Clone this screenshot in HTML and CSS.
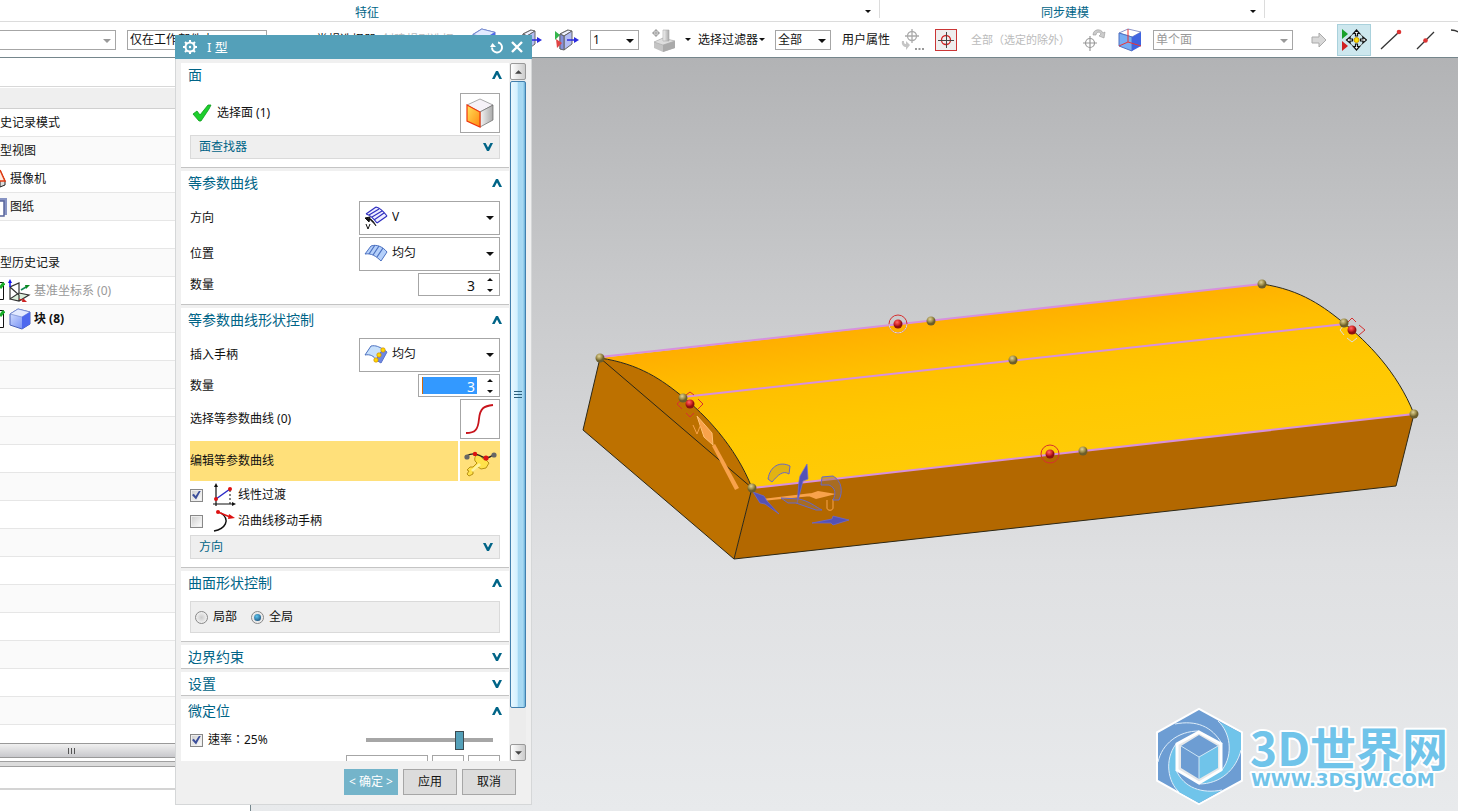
FILE: index.html
```html
<!DOCTYPE html>
<html lang="zh-CN">
<head>
<meta charset="utf-8">
<title>I 型</title>
<link rel="stylesheet" href="styles.css">
</head>
<body>
<svg width="0" height="0" class="defs" aria-hidden="true">
  <defs>
    <linearGradient id="cubeBlue" x1="0" y1="0" x2="1" y2="1"><stop offset="0" stop-color="#dfe8ff"/><stop offset="1" stop-color="#5f7df2"/></linearGradient>
    <linearGradient id="faceOrange" x1="0" y1="0" x2="1" y2="1"><stop offset="0" stop-color="#ffe25a"/><stop offset="1" stop-color="#ff8a10"/></linearGradient>
    <linearGradient id="greyFace"><stop offset="0" stop-color="#f4f4f4"/><stop offset="1" stop-color="#aaa"/></linearGradient>
    <symbol id="caret" viewBox="0 0 8 4"><path d="M0 0h8L4 4z" fill="currentColor"/></symbol>
    <symbol id="up" viewBox="0 0 12 10"><path d="M1 9h2.600L6 4.500 8.400 9H11L7 1H5z" fill="#006487"/></symbol>
    <symbol id="down" viewBox="0 0 12 10"><path d="M1 1h2.600L6 5.500 8.400 1H11L7 9H5z" fill="#006487"/></symbol>
    <symbol id="spin" viewBox="0 0 6 14"><path d="M0 3h6L3 0zM0 11h6L3 14z" fill="#111"/></symbol>
    <symbol id="cube" viewBox="0 0 22 22"><path d="M1 6 9 1l12 3v12l-8 5L1 17z" fill="url(#cubeBlue)" stroke="#4a62b8"/><path d="M1 6l12 3 8-5-12-3z" fill="#e3eaff" stroke="#7187cf" stroke-width=".7"/><path d="M13 9l8-5v12l-8 5z" fill="#4d68ee"/></symbol>
    <symbol id="slab" viewBox="0 0 26 24"><path d="M6 6 14 2v13l-8 6z" fill="url(#cubeBlue)" stroke="#666"/><path d="M6 6l8-4 4 1-8 5z" fill="#eef1ff" stroke="#666"/><path d="M10 8l8-5v13l-8 6z" fill="#b3bdf4" stroke="#666"/><path d="M6 6l4 2v14l-4-1z" fill="#8590dc" stroke="#666"/><path d="M13 12h8" stroke="#2b2bdf" stroke-width="1.500"/><path d="M20 9l5 3-5 3z" fill="#2b2bdf"/></symbol>
  </defs>
</svg>
<div class="app">
  <header class="ribbon">
    <div class="group group-feature"><span class="group-name">特征</span><svg class="caret"><use href="#caret"/></svg></div>
    <div class="group group-sync"><span class="group-name">同步建模</span><svg class="caret"><use href="#caret"/></svg></div>
    <div class="group-rest"></div>
  </header>
  <nav class="toolbar">
    <span class="combo w116 first"><select class="dim" aria-label="类型过滤器"><option></option></select><svg class="caret dim"><use href="#caret"/></svg></span>
    <span class="combo w140"><select aria-label="选择范围"><option>仅在工作部件内</option></select></span>
    <span class="tool-text w60">常规选择器</span>
    <span class="tool-text w84 faint">创建规则选择</span>
    <svg class="ic24" viewBox="0 0 22 22"><use href="#cube"/></svg>
    <svg class="slab-a" viewBox="0 0 26 24"><use href="#slab"/></svg>
    <svg class="slab-b" viewBox="0 0 26 24"><use href="#slab"/><path d="M1 3l5 4-5 5z" fill="#35b54c"/><path d="M2 11l6 4-5 5z" fill="#e04343"/></svg>
    <span class="combo w49"><select aria-label="层"><option>1</option></select><svg class="caret"><use href="#caret"/></svg></span>
    <svg class="ic24 stock" viewBox="0 0 24 24"><path d="M2 14l9-4 12 3v7l-12 4-9-4z" fill="#c4c4c4"/><path d="M2 14l9-4 12 3-12 4z" fill="#ddd" stroke="#aaa" stroke-width=".6"/><path d="M11 17v7l12-4v-7z" fill="#aaa"/><path d="M11 2h6v11h-6z" fill="url(#greyFace)" stroke="#aaa" stroke-width=".6"/><circle cx="4" cy="5" r="2.500" fill="none" stroke="#999"/><path d="M0 5h8M4 1v8" stroke="#999"/></svg>
    <svg class="caret small"><use href="#caret"/></svg>
    <span class="tool-text w60">选择过滤器</span>
    <svg class="caret small last"><use href="#caret"/></svg>
    <span class="combo w56"><select aria-label="过滤"><option>全部</option></select><svg class="caret"><use href="#caret"/></svg></span>
    <span class="tool-text attr">用户属性</span>
    <svg class="ic24 snap" viewBox="0 0 24 24"><g fill="none" stroke="#aaa" stroke-width="1.300"><circle cx="12" cy="8" r="4.500"/><path d="M5 8h14M12 1v14"/></g><path d="M2 13c-1 4 2 6 4 6v3l4-5-4-4v3c-2 0-2-1-2-3z" fill="#c5c5c5"/><path d="M15 20h2v2h-2zM18.500 20h2v2h-2zM22 20h2v2h-2z" fill="#999"/></svg>
    <svg class="target" viewBox="0 0 22 22"><rect x=".5" y=".5" width="21" height="21" fill="#eee" stroke="#cb3636"/><circle cx="11" cy="11" r="4.500" fill="none" stroke="#d02222" stroke-width="1.300"/><path d="M3 11.500h16M11.500 3v16" stroke="#444"/></svg>
    <span class="tool-text w111 faint">全部（选定的除外）</span>
    <svg class="ic24" viewBox="0 0 24 24"><g fill="none" stroke="#999" stroke-width="1.200"><circle cx="8" cy="15" r="4.500"/><path d="M1 15h14M8 8v15"/></g><path d="M11 7c0-6 8-7 10-2l2-1-1 6-5-2 2-2c-1-3-5-2-5 1z" fill="#ccc" stroke="#999" stroke-width=".6"/></svg>
    <svg class="ic24 facecube" viewBox="0 0 24 24"><path d="M1 5 10 1l13 3-9 5z" fill="#fff" stroke="#8a93c8"/><path d="M1 5l13 4v14L1 18z" fill="#77adf3" stroke="#5070c0"/><path d="M14 9l9-5v14l-9 5z" fill="#3f64e0"/><path d="M10 1v13l13 4M10 14 1 18" stroke="#e33" fill="none"/></svg>
    <span class="combo w140 faces"><select class="dim" aria-label="面规则"><option>单个面</option></select><svg class="caret dim"><use href="#caret"/></svg></span>
    <svg class="next" viewBox="0 0 16 16"><path d="M1 5h7V1l7 7-7 7v-4H1z" fill="#d8d8d8" stroke="#aaa"/></svg>
    <button class="snap-on" aria-label="启用捕捉点"><svg viewBox="0 0 26 24"><path d="M1 1l6 5-6 5z" fill="#19a12b"/><path d="M1 13l6 5-6 5z" fill="#d02020"/><circle cx="15.500" cy="12" r="7" fill="none" stroke="#555"/><g fill="#fff" stroke="#111" stroke-width="1.200"><path d="M15.500 2l3 3.500h-2V8h-2V5.500h-2zM15.500 22l3-3.500h-2V16h-2v2.500h-2zM5.500 12 9 9v2h2.500v2H9v2zM25.500 12 22 9v2h-2.500v2H22v2z"/></g><circle cx="15.500" cy="12" r="2.500" fill="#ffe000" stroke="#c90"/></svg></button>
    <svg class="ic24 line-a" viewBox="0 0 24 24"><path d="M2 21 20 4" stroke="#333" stroke-width="1.300"/><circle cx="20" cy="4" r="2.300" fill="#d33"/></svg>
    <svg class="ic24 line-b" viewBox="0 0 24 24"><path d="M4 21 21 4" stroke="#333" stroke-width="1.300"/><circle cx="12.500" cy="12.500" r="2.300" fill="#d33"/></svg>
    <svg class="line-c" viewBox="0 0 12 24"><path d="M0 2c5 0 9 2 11 6" stroke="#333" fill="none" stroke-width="1.300"/></svg>
  </nav>
  <div class="work">
    <aside class="navigator">
      <div class="nav-top"></div>
      <div class="nav-head"></div>
      <ul class="tree">
        <li>史记录模式</li>
        <li>型视图</li>
        <li><svg class="edge" viewBox="0 0 8 20"><path d="M0 1l5 11v4l-5 2z" fill="#ddd" stroke="#222"/><path d="M0 1l5 11H0" fill="#ffe9dd" stroke="#e33a10" stroke-width="1.500"/></svg>摄像机</li>
        <li><svg class="edge" viewBox="0 0 8 22"><path d="M0 2h7v17H0" fill="#8793c3"/><path d="M0 5h4v15H0" fill="#fff" stroke="#5a659c" stroke-width="1.500"/></svg>图纸</li>
        <li></li>
        <li>型历史记录</li>
        <li class="grey"><svg class="box" viewBox="0 0 5 18"><path d="M0 .5h3.500v17H0" fill="#fff" stroke="#111"/><path d="M0 6l4-5" stroke="#1aae2a" stroke-width="3"/></svg><svg class="ic24" viewBox="0 0 24 24"><path d="M2 20l9-6 10 2-10 6z" fill="#dcefdc"/><path d="M2 8v12l9-6V4zM2 20l9 2 10-6-10-2M2 8l9 8v6" fill="none" stroke="#333" stroke-width="1.200"/><path d="M2 8V3" stroke="#11e" stroke-width="1.500"/><path d="M0 4l2-4 2 4z" fill="#11e"/><path d="M13 11l5-3" stroke="#185" stroke-width="1.500"/><path d="M17 6l5 0-4 4z" fill="#0a8a20"/><path d="M11 20l6 2" stroke="#c22"/><path d="M15 19l4 4h-5z" fill="#c22"/></svg>基准坐标系 (0)</li>
        <li class="strong"><svg class="box" viewBox="0 0 5 18"><path d="M0 .5h3.500v17H0" fill="#fff" stroke="#111"/><path d="M0 6l4-5" stroke="#1aae2a" stroke-width="3"/></svg><svg class="ic24" viewBox="0 0 24 24"><use href="#cube" x="1" y="1" width="22" height="22"/></svg>块 (8)</li>
        <li></li><li></li><li></li><li></li><li></li><li></li><li></li><li></li><li></li><li></li><li></li><li></li><li></li><li></li>
      </ul>
      <div class="nav-scroll"><i></i><i></i><i></i></div>
      <div class="nav-split"></div>
      <div class="nav-foot"></div>
    </aside>
    <main class="viewport">
      <svg class="scene" viewBox="251 58 1207 753" role="img" aria-label="模型">
        <defs>
          <linearGradient id="top" gradientUnits="userSpaceOnUse" x1="930" y1="318" x2="950" y2="476"><stop offset="0" stop-color="#ffae00"/><stop offset=".28" stop-color="#ffbf00"/><stop offset=".6" stop-color="#ffc800"/><stop offset="1" stop-color="#ffcb08"/></linearGradient>
          <radialGradient id="ball" cx=".4" cy=".3"><stop offset="0" stop-color="#e0d29a"/><stop offset=".6" stop-color="#a3934f"/><stop offset="1" stop-color="#6b5e2c"/></radialGradient>
          <radialGradient id="red" cx=".4" cy=".3"><stop offset="0" stop-color="#ff6a6a"/><stop offset=".6" stop-color="#d82a2a"/><stop offset="1" stop-color="#8e1010"/></radialGradient>
        </defs>
        <path d="M600 358 583 430 734 559 752 488C735 445 704 414 683 397S640 364 600 358z" fill="#bd7100"/>
        <path d="M752 488 734 559 1396 486 1414 414z" fill="#b36800"/>
        <path d="M600 358C640 364 662 380 683 397S735 445 752 488L1414 414C1397 371 1366 341 1345 324S1302 290 1262 284z" fill="url(#top)"/>
        <path d="M600 358 583 430 734 559 1396 486 1414 414M752 488 734 559M600 358 752 488M600 358C640 364 662 380 683 397S735 445 752 488M1262 284C1302 290 1324 307 1345 324S1397 371 1414 414" fill="none" stroke="#2c2817"/>
        <path d="M600 357 1262 284M683 397 1345 324M752 488 1414 414" stroke="#d890dd" stroke-width="2"/>
        <g fill="#f8a24b"><path d="M712 446l3-2 24 44-4 2z"/><path d="M697 416l15 17 1 12-9-8z" stroke="#ffbf72"/><path d="M762 499l50-6v3l-50 5zM806 495l12-4 18 3-20 5z"/></g>
        <path d="M693 425l4 9 4-10M827 500v8c0 3 6 3 6 0v-9" fill="none" stroke="#f8a24b"/>
        <g fill="#5452b5" stroke="#6b68d9" stroke-width=".7"><path d="M753 492l11 4 3 5 12 13-14-10-5-1zM797 504l2-23 1-5 7-12 1 15-5 2zM812 523l20-4 1-3 16 4-16 5-2-2z"/></g>
        <g fill="#9d7044" fill-opacity=".5" stroke="#6868c8"><path d="M768 479c2-13 12-18 22-13l-1 8c-6-4-11 1-17 8z" fill="#c59c20"/><path d="M822 477l11-1c9 5 10 16 6 24h-6c3-6 3-12-4-15h-8zM781 498l18 1c10 2 17 8 23 11h-6l-20-7h-8z"/></g>
        <g fill="none" stroke="#d63030"><circle cx="898" cy="324" r="9"/><path d="M889 324a9 9 0 0 0 18 0" stroke="#ddd"/><circle cx="1050" cy="454" r="9"/><path d="M686 395l4-3 4 3M698 399l5 5-5 5M694 413l-4 4-4-4M682 409l-5-5 5-5M1348 322l4-4 4 4M1359 325l6 5-6 5"/><path d="M1344 325l-4 5 4 5M1347 338l5 4 5-4" stroke="#ddd"/></g>
        <g fill="url(#ball)"><circle cx="600" cy="358" r="4.500"/><circle cx="683" cy="398" r="4.500"/><circle cx="752" cy="488" r="4.500"/><circle cx="931" cy="321" r="4.500"/><circle cx="1013" cy="360" r="4.500"/><circle cx="1083" cy="451" r="4.500"/><circle cx="1262" cy="284" r="4.500"/><circle cx="1344" cy="323" r="4.500"/><circle cx="1414" cy="414" r="4.500"/></g>
        <g fill="url(#red)"><circle cx="690" cy="404" r="4.500"/><circle cx="898" cy="324" r="4.500"/><circle cx="1050" cy="454" r="4.500"/><circle cx="1352" cy="330" r="4.500"/></g>
        <g class="mark">
          <path d="M1199 710 1241 733v47l-42 23-41-23v-47z" fill="#6d9dd3" stroke="#fff" stroke-width="4" paint-order="stroke"/>
          <path d="M1218 721C1230 732 1234 754 1222 770L1199 784C1220 784 1236 770 1241 750V733z" fill="#70c4ea"/>
          <path d="M1222 790C1202 794 1184 788 1176 770V744C1164 760 1168 782 1179 792L1199 803z" fill="#70c4ea"/>
          <path d="M1222 744C1212 726 1196 720 1175 724M1222 770C1234 754 1230 732 1218 721M1199 784C1220 784 1236 770 1241 750M1176 770C1184 788 1202 794 1222 790M1176 744C1164 760 1168 782 1179 792M1199 731C1178 731 1162 744 1158 762" fill="none" stroke="#dfeefa"/>
          <path d="M1199 732 1221 744v26l-22 13-22-13v-26z" fill="#e6e8ea" stroke="#fff" stroke-width="3"/>
          <path d="M1199 735 1218 746 1199 757v22l-18-11v-22z" fill="#6d9dd3"/><path d="M1218 746 1199 757v22l19-11z" fill="#70c4ea"/><path d="M1181 746l18 11 19-11M1199 757v22" stroke="#cde5f5" fill="none"/>
          <text class="mark-name" x="1250" y="766">3D世界网</text>
          <text class="mark-url" x="1251" y="786">WWW.3DSJW.COM</text>
        </g>
      </svg>
    </main>
  </div>

  <form class="dialog">
    <div class="title">
      <svg class="gear" viewBox="0 0 16 16"><circle cx="8" cy="8" r="4.500" fill="none" stroke="#fff" stroke-width="2"/><path d="M8 1v3M8 12v3M1 8h3M12 8h3M3 3l2 2M11 11l2 2M3 13l2-2M11 5l2-2" stroke="#fff" stroke-width="2"/><circle cx="8" cy="8" r="1.200" fill="#fff"/></svg>
      <h1>I 型</h1>
      <button type="button" aria-label="重置"><svg viewBox="0 0 14 14"><path d="M8 2.500a5 5 0 1 1-6 5" fill="none" stroke="#fff" stroke-width="2"/><path d="M0 7l2.500-4L6 7z" fill="#fff"/></svg></button>
      <button type="button" aria-label="关闭"><svg viewBox="0 0 14 14"><path d="M2 2l10 10M12 2 2 12" stroke="#fff" stroke-width="2.400"/></svg></button>
    </div>
    <div class="main">
      <div class="sections">
        <section>
          <h2>面<svg><use href="#up"/></svg></h2>
          <div class="rows">
            <div class="row tall"><svg class="tick" viewBox="0 0 20 18"><path d="M1 10l4-3 3 4L16 1l3 0-2 4L9 17H7z" fill="#1dcf2c" stroke="#0b9a1c" stroke-width=".8"/></svg><span class="grow">选择面 (1)</span><button type="button" class="pick" aria-label="选择面"><svg viewBox="0 0 30 30"><path d="M2 7 15 1l13 6-13 7z" fill="#f6f2f8" stroke="#888" stroke-width=".7"/><path d="M15 14l13-7v15l-13 7z" fill="url(#greyFace)" stroke="#666" stroke-width=".7"/><path d="M2 7l13 7v15L2 23z" fill="url(#faceOrange)" stroke="#f0350c" stroke-width="1.200"/></svg></button></div>
            <button type="button" class="finder">面查找器<svg><use href="#down"/></svg></button>
          </div>
        </section>
        <section>
          <h2>等参数曲线<svg><use href="#up"/></svg></h2>
          <div class="rows">
            <div class="row"><label class="grow" for="dir">方向</label><span class="drop"><select id="dir"><option>V</option></select><svg class="icon" viewBox="0 0 24 24"><path d="M2 8 12 1l11 9-10 7C10 13 6 9 2 8z" fill="#eef"/><path d="M2 8C6 9 10 13 13 17M12 1c4 1 8 5 11 9M2 8l10-7M5 9l10-6M8 11l10-6M10 14l10-7M13 17l10-7" fill="none" stroke="#3030c0" stroke-width="1.200"/><path d="M1 12l5-1-1 5zM4 12c4 1 6 4 8 8" fill="#111" stroke="#111" fill-rule="evenodd"/><path d="M2 18l2 5 2-5" fill="none" stroke="#111"/></svg><svg class="caret"><use href="#caret"/></svg></span></div>
            <div class="row"><label class="grow" for="pos">位置</label><span class="drop"><select id="pos"><option>均匀</option></select><svg class="icon" viewBox="0 0 24 24"><path d="M1 12 7 4c6-2 12 1 16 6l-6 9C12 14 7 11 1 12z" fill="#b5d0fa" stroke="#4b70c0"/><path d="M5 12l6-9M9 13l6-9M13 15l6-9" stroke="#4b70c0" stroke-width="1.200"/></svg><svg class="caret"><use href="#caret"/></svg></span></div>
            <div class="row"><label class="grow" for="n1">数量</label><span class="number"><input id="n1" value="3"><svg><use href="#spin"/></svg></span></div>
          </div>
        </section>
        <section>
          <h2>等参数曲线形状控制<svg><use href="#up"/></svg></h2>
          <div class="rows">
            <div class="row"><label class="grow" for="ins">插入手柄</label><span class="drop"><select id="ins"><option>均匀</option></select><svg class="icon" viewBox="0 0 24 24"><path d="M1 12 7 3c5-1 8 1 12 3l-7 11C10 13 6 11 1 12z" fill="#c7e0fb" stroke="#4b70c0"/><path d="M19 6l4 3-6 11-5-3z" fill="#6f88e2" stroke="#5a74cc"/><g fill="#ffd800" stroke="#d08a00" stroke-width=".7"><circle cx="19" cy="7" r="2.200"/><circle cx="15" cy="12" r="2.200"/><circle cx="12" cy="17" r="2.200"/></g></svg><svg class="caret"><use href="#caret"/></svg></span></div>
            <div class="row"><label class="grow" for="n2">数量</label><span class="number active"><input id="n2" value="3"><svg><use href="#spin"/></svg></span></div>
            <div class="row tall"><span class="grow">选择等参数曲线 (0)</span><button type="button" class="pick" aria-label="选择等参数曲线"><svg viewBox="0 0 30 30"><path d="M1 29c9 0 12-3 13-14S19 2 28 1" fill="none" stroke="#c8141c" stroke-width="1.800"/></svg></button></div>
            <div class="row edit"><span class="grow">编辑等参数曲线</span><button type="button" class="pick" aria-label="编辑等参数曲线"><svg viewBox="0 0 34 26"><path d="M12 10c-2-7 7-8 7-3l4 2 3 3-3 5-5 1-3-2-5 4v3l-4 2-2-2 2-3-2-1 3-3 3 0 4-4z" fill="#ffe24a" stroke="#a67c00" stroke-width=".8"/><path d="M8 19l8-7 2 2-8 7z" fill="#fff3a0"/><path d="M3 5c8-4 10-2 19 2 3 0 6-1 9-4" fill="none" stroke="#222" stroke-width="1.200"/><circle cx="4" cy="6" r="2.600" fill="#666"/><circle cx="31" cy="4" r="2.600" fill="#666"/><circle cx="12" cy="3" r="2.200" fill="#d11"/><circle cx="23" cy="7" r="2.600" fill="#d11"/></svg></button></div>
            <label class="check"><input type="checkbox" checked><svg class="ic24" viewBox="0 0 24 24"><path d="M4 23V3M1 21h20" stroke="#111" stroke-width="1.200"/><path d="M18 7v14" stroke="#111" stroke-dasharray="2 2"/><path d="M2 4l2-4 2 4zM20 19l4 2-4 2z" fill="#111"/><path d="M4 16 18 6" stroke="#2929c8" stroke-width="1.500"/><circle cx="4" cy="16" r="2" fill="#d11"/><circle cx="18" cy="6" r="2" fill="#d11"/></svg>线性过渡</label>
            <label class="check"><input type="checkbox"><svg class="ic24" viewBox="0 0 24 24"><path d="M2 22c11-2 17-11 7-18" fill="none" stroke="#111" stroke-width="1.500"/><path d="M6 3l12 5" stroke="#d11" stroke-width="1.500"/><path d="M17 5l6 4-7 1z" fill="#d11"/><circle cx="6" cy="3" r="2" fill="#d11"/></svg>沿曲线移动手柄</label>
            <button type="button" class="finder">方向<svg><use href="#down"/></svg></button>
          </div>
        </section>
        <section>
          <h2>曲面形状控制<svg><use href="#up"/></svg></h2>
          <div class="rows">
            <div class="radios"><label><input type="radio" name="scope">局部</label><label><input type="radio" name="scope" checked>全局</label></div>
          </div>
        </section>
        <section><h2>边界约束<svg><use href="#down"/></svg></h2></section>
        <section><h2>设置<svg><use href="#down"/></svg></h2></section>
        <section>
          <h2>微定位<svg><use href="#up"/></svg></h2>
          <div class="rows">
            <div class="row rate"><label class="grow" lang="zh-TW"><input type="checkbox" checked>速率：25%</label><input class="slider" type="range" min="0" max="100" value="75" aria-label="速率"></div>
            <div class="row steps"><span class="step-a"></span><span class="step-b"></span><span class="step-b"></span></div>
          </div>
        </section>
      </div>
      <div class="bar">
        <span class="bar-end"><svg><use href="#caret"/></svg></span>
        <div class="thumb"><i></i><i></i><i></i></div>
        <span class="bar-end"><svg><use href="#caret"/></svg></span>
      </div>
    </div>
    <div class="actions">
      <button type="button" class="ok">&lt; 确定 &gt;</button>
      <button type="button">应用</button>
      <button type="button">取消</button>
    </div>
  </form>
</div>
</body>
</html>
```
FILE: styles.css
```css
* { box-sizing: border-box; }
body { margin: 0; color: #111; font: 12px/16px "Noto Sans", "Noto Sans CJK SC", sans-serif; }
button, input, select { font: inherit; color: inherit; margin: 0; }
svg { display: block; flex: none; }
.defs { position: absolute; }
.app { position: relative; display: flex; flex-direction: column; height: 100vh; overflow: hidden; background: #fff; }
.caret { width: 8px; height: 4px; color: #111; }
.caret.dim { color: #999; }
.ic24 { width: 24px; height: 24px; }

/* ribbon group names */
.ribbon { display: flex; height: 22px; border-bottom: 1px solid #dcdcdc; }
.group { display: flex; align-items: center; height: 18px; padding-top: 4px; border-right: 1px solid #dcdcdc; color: #006487; }
.group .caret { width: 6px; height: 3px; margin-right: 8px; }
.group-feature { flex: 880; }
.group-sync { flex: 385; }
.group-rest { flex: 193; }
.group-name { flex: 1; text-align: center; padding-top: 3px; }
.group-feature .group-name { padding-right: 131px; }

/* selection bar */
.toolbar { display: flex; align-items: center; height: 36px; border-bottom: 1px solid #75868c; white-space: nowrap; overflow: hidden; }
.toolbar > * { flex: none; }
.combo { position: relative; height: 20px; }
.combo select { width: 100%; height: 20px; padding: 0 2px; border: 1px solid #a6a6a6; border-radius: 0; background: #fff; appearance: none; }
.combo select.dim { color: #999; }
.combo .caret { position: absolute; right: 5px; top: 9px; }
.w116 { width: 116px; }
.first select { border-left: 0; }
.w140 { width: 140px; margin-left: 11px; }
.w60 { width: 60px; }
.w84 { width: 84px; margin-left: 6px; }
.w140 + .w60 { margin-left: 49px; }
.faint { color: #bbb; }
.w84 + .ic24 { margin-left: 6px; }
.slab-a { width: 26px; height: 24px; margin-left: 21px; }
.slab-b { width: 26px; height: 24px; margin-left: 11px; }
.w49 { width: 49px; margin-left: 10px; }
.stock { margin-left: 13px; }
.caret.small { width: 6px; height: 3px; margin: 0 7px 0 9px; }
.caret.last { margin: 0 10px 0 1px; }
.w56 { width: 56px; margin-right: 11px; }
.attr { width: 58px; }
.target { width: 22px; height: 22px; margin-left: 11px; }
.w111 { width: 111px; margin-left: 14px; font-size: 11px; }
.facecube { margin-left: 12px; }
.faces { margin-left: 11px; }
.next { width: 16px; height: 16px; margin-left: 18px; }
.snap-on { width: 34px; height: 32px; padding: 3px; margin-left: 10px; border: 1px solid #a9d1dc; background: #cde7ee; }
.snap-on svg { width: 26px; height: 24px; }
.line-a { margin-left: 8px; }
.line-b { margin-left: 10px; }
.line-c { width: 12px; height: 24px; margin-left: 14px; }

.work { flex: 1; display: flex; min-height: 0; }
.navigator { width: 251px; border-right: 1px solid #75868c; overflow: hidden; display: flex; flex-direction: column; }
.nav-top { height: 29px; border-bottom: 1px solid #d8d8d8; }
.nav-head { height: 21px; margin-top: 1px; background: #efefef; border-bottom: 1px solid #d0d0d0; flex: none; }
.nav-top, .nav-scroll, .nav-split { flex: none; }
.tree { margin: 0; padding: 0; list-style: none; flex: none; }
.tree li { display: flex; align-items: center; height: 28px; border-bottom: 1px solid #e6e6e6; }
.tree li:nth-child(even) { background: #fafafa; }
.tree .edge { width: 8px; height: 22px; margin-right: 2px; }
.tree .box { width: 5px; height: 18px; margin-right: 3px; }
.tree .ic24 { margin-right: 2px; }
.grey { color: #999; }
.strong { font-weight: 700; }
.nav-scroll { display: flex; gap: 2px; height: 15px; margin-top: 18px; padding: 4px 0 0 68px; border: solid #999; border-width: 1px 0; background: linear-gradient(#f0f0f0, #c8c8cc); }
.nav-scroll i { width: 1px; height: 6px; background: #555; }
.nav-split { height: 6px; margin-top: 3px; background: #dcdcdc; border: solid #a0a0a0; border-width: 1px 0; }
.nav-foot { height: 23px; border-bottom: 2px solid #d4d4d4; flex: none; }

.viewport { flex: 1; min-width: 0; background: linear-gradient(#b2b3b5, #c8c9cb 30%, #dfe0e2 67%, #e8eaec); }
.scene { width: 100%; height: 100%; }
.mark text { fill: #70c4ea; stroke: #fff; stroke-width: 4px; paint-order: stroke; stroke-linejoin: round; }
.mark-name { font: 700 46px "Noto Sans CJK SC", sans-serif; }
.mark-url { font: 700 18px "DejaVu Sans", sans-serif; }

/* floating dialog */
.dialog { position: absolute; left: 175px; top: 35px; width: 357px; height: 770px; display: flex; flex-direction: column; background: #f0f0f0; border: solid #d5d7d8; border-width: 0 1px 1px; }
.title { display: flex; align-items: center; height: 24px; margin: 0 -1px; padding: 0 8px 0 7px; background: #54a0b9; color: #fff; flex: none; }
.title h1 { flex: 1; margin: 0 0 0 9px; font-size: 13px; font-weight: 400; }
.gear { width: 16px; height: 16px; }
.title button { width: 14px; height: 14px; padding: 0; margin-left: 6px; border: 0; background: none; }
.title button svg { width: 14px; height: 14px; }
.main { flex: 1; display: flex; min-height: 0; margin: 4px 5px 0; }
.sections { flex: 1; display: flex; flex-direction: column; gap: 3px; min-width: 0; overflow: hidden; height: 698px; }
section { flex: none; background: #fff; border-bottom: 1px solid #c4c4c4; }
h2 { display: flex; align-items: center; justify-content: space-between; height: 23px; margin: 0; padding: 1px 6px 0 7px; font-size: 14px; font-weight: 400; color: #006487; }
h2 svg { width: 12px; height: 10px; }
.rows { display: flex; flex-direction: column; gap: 2px; padding: 7px 9px 8px; }
.row { display: flex; align-items: center; }
.grow { flex: 1; }
.tick { width: 20px; height: 18px; margin: 0 5px 0 2px; }
.pick { display: grid; place-items: center; width: 40px; height: 40px; padding: 0; border: 1px solid #a6a6a6; background: #fff; }
.pick svg { width: 30px; height: 30px; }
.finder { display: flex; align-items: center; justify-content: space-between; height: 24px; padding: 0 5px 0 8px; border: 1px solid #dadada; background: #efefef; color: #006487; }
.finder svg { width: 12px; height: 10px; }
.drop { position: relative; width: 141px; height: 34px; }
.drop select { width: 100%; height: 34px; padding: 0 0 2px 32px; border: 1px solid #a6a6a6; border-radius: 0; background: #fff; appearance: none; }
.drop .icon { position: absolute; left: 5px; top: 5px; width: 24px; height: 24px; }
.drop .caret { position: absolute; right: 6px; top: 15px; }
.number { display: flex; align-items: center; width: 82px; height: 23px; padding: 0 6px 0 3px; border: 1px solid #a6a6a6; background: #fff; }
.number input { flex: 1; min-width: 0; height: 17px; padding: 1px 2px 0; margin-right: 10px; border: 0; text-align: right; font-size: 14px; }
.number svg { width: 6px; height: 14px; }
.active input { background: #3399ff; color: #fff; border-left: 1px solid #d06a10; }
.edit .grow { height: 40px; line-height: 40px; background: #ffe07a; margin-right: 2px; }
.edit .pick { border: 0; padding-top: 6px; background: #ffe07a; }
.edit .pick svg { width: 34px; height: 26px; }
.check { display: flex; align-items: center; height: 24px; }
.check svg { margin: 0 2px 0 9px; }
input[type="checkbox"] { display: grid; place-items: center; flex: none; width: 13px; height: 13px; appearance: none; border: 1px solid #888; background: linear-gradient(135deg, #ccc, #fff); outline: 1px solid #eee; outline-offset: -2px; }
input[type="checkbox"]:checked::after { content: ""; width: 9px; height: 9px; background: #3c4f9b; clip-path: polygon(0 50%, 20% 35%, 40% 60%, 80% 0, 100% 0, 45% 100%); }
.radios { display: flex; align-items: center; gap: 14px; height: 32px; padding-left: 4px; border: 1px solid #dadada; background: #efefef; }
.radios label { display: flex; align-items: center; gap: 5px; }
input[type="radio"] { display: grid; place-items: center; width: 13px; height: 13px; appearance: none; border: 1px solid #888; border-radius: 50%; background: radial-gradient(#ccc, #fff); }
input[type="radio"]:checked::after { content: ""; width: 7px; height: 7px; border-radius: 50%; background: radial-gradient(circle at 40% 35%, #5ec5ef, #0d3a66); }
.rate { height: 22px; }
.rate label { display: flex; align-items: center; gap: 5px; font-family: "Noto Sans", "Noto Sans CJK TC", sans-serif; }
.slider { width: 127px; height: 20px; margin-right: 7px; appearance: none; background: linear-gradient(#a6a6a6, #a6a6a6) center / 100% 4px no-repeat; }
.slider::-webkit-slider-thumb { appearance: none; width: 9px; height: 19px; border: 1px solid #3c4a50; background: #54a0b9; }
.steps { gap: 4px; justify-content: flex-end; padding-top: 2px; }
.steps span { height: 24px; border: 1px solid #a6a6a6; }
.step-a { width: 82px; }
.step-b { width: 32px; }
.bar { display: flex; flex-direction: column; width: 16px; height: 698px; margin-left: 1px; background: #ececec; flex: none; }
.bar-end { display: grid; place-items: center; height: 17px; border: 1px solid #999; border-radius: 2px; background: linear-gradient(90deg, #fff, #ccc); color: #444; }
.bar-end svg { width: 7px; height: 4px; }
.bar-end:first-child svg { rotate: 180deg; }
.thumb { height: 627px; margin: 1px 0 auto; display: flex; flex-direction: column; align-items: center; justify-content: center; gap: 2px; border: 1px solid #4380ae; border-radius: 2px; background: linear-gradient(90deg, #e9f8ff 0, #d3f0ff 45%, #a5d8f3 50%, #a9d9f2 85%, #6ab0d8); }
.thumb i { width: 8px; height: 1px; background: #2d607c; }
.actions { display: flex; justify-content: flex-end; gap: 5px; padding: 8px 15px 9px; flex: none; }
.actions button { width: 54px; height: 26px; padding: 0; border: 1px solid #a6a6a6; background: #dcdcdc; }
.actions .ok { border-color: #74b4ca; background: #74b4ca; color: #fff; }
```
